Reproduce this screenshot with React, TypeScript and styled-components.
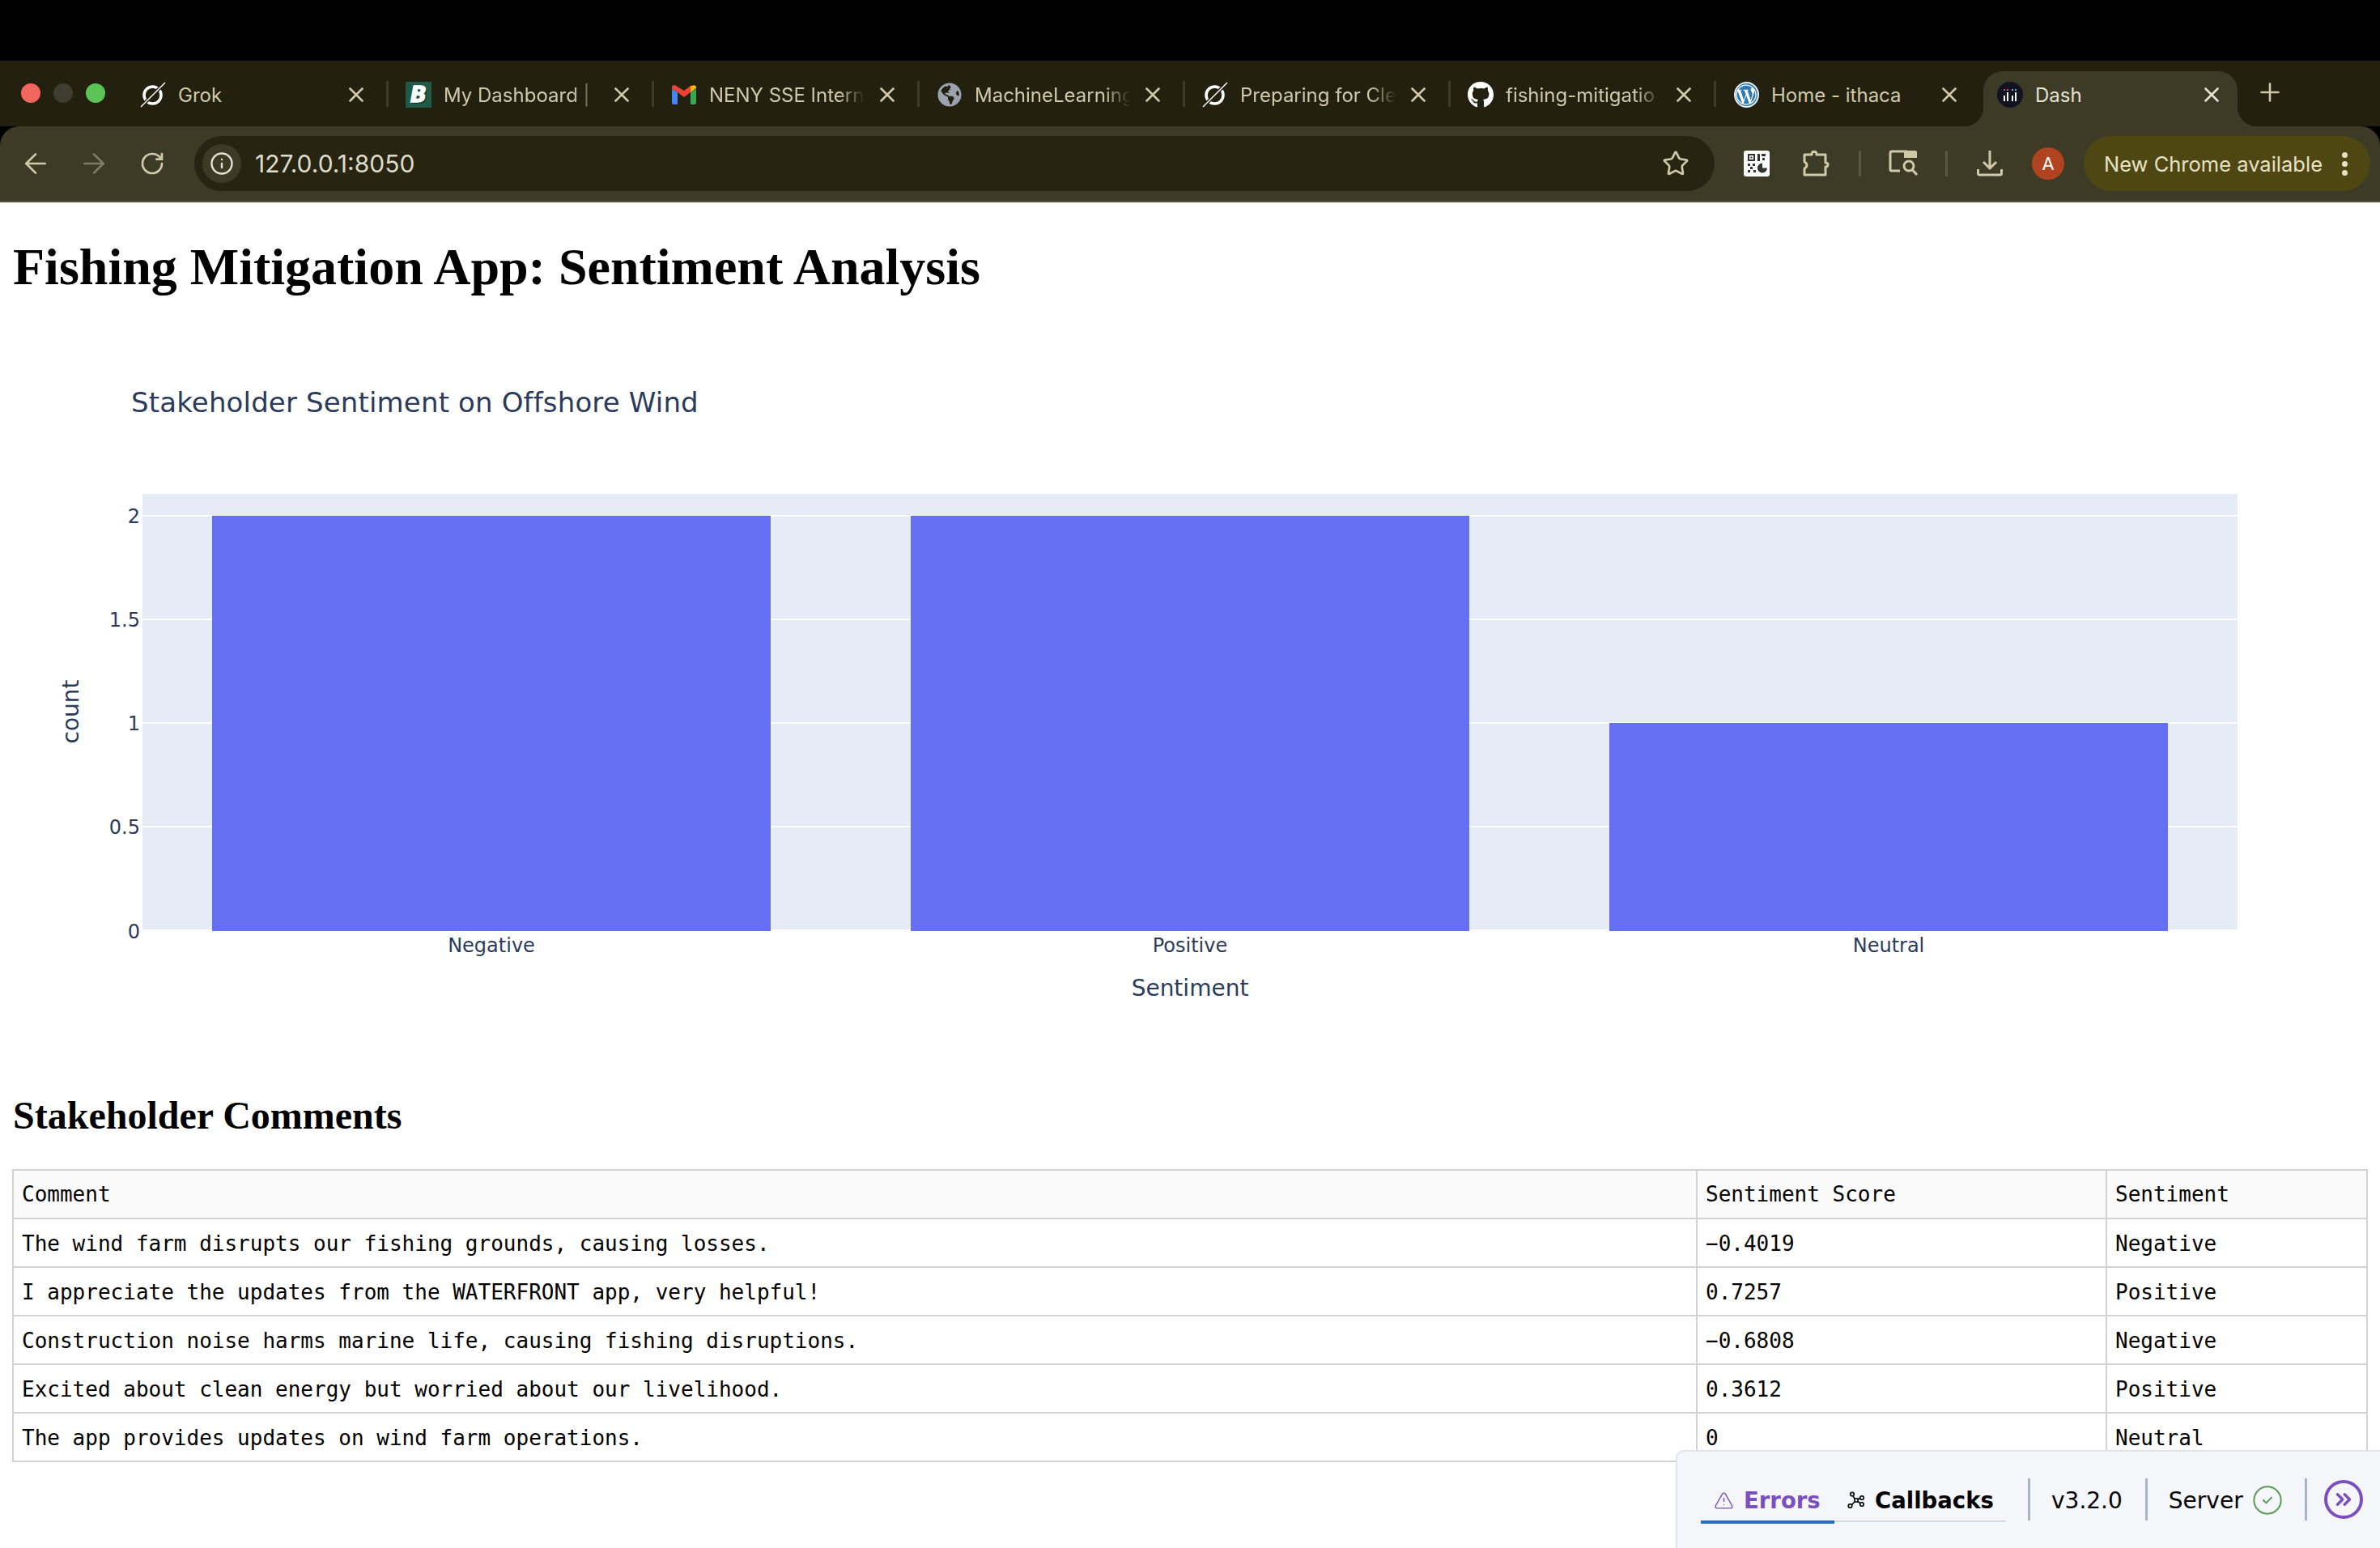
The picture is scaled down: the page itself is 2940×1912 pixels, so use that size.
import React from 'react';
import styled, { createGlobalStyle } from 'styled-components';
import { X, Plus, ArrowLeft, ArrowRight, RotateCw, Info, Star, TriangleAlert, CircleCheck, ChevronsRight } from 'lucide-react';
import { FaGithub, FaGlobeAmericas, FaWordpressSimple } from 'react-icons/fa';

const GlobalStyle = createGlobalStyle`
  html, body {
    margin: 0;
    background: #fff;
    overflow: hidden;
  }
  body {
    font-family: "Liberation Serif", serif;
    color: #000;
  }
`;

const GrokIcon = () => (
  <svg width="32" height="32" viewBox="0 0 32 32" fill="none">
    <circle cx="15.500" cy="16.500" r="10.500" stroke="#fff" strokeWidth="3.500" />
    <path d="M3 29 29 3" stroke="#242010" strokeWidth="4.500" />
    <path d="M1 31 31 1" stroke="#fff" strokeWidth="1.500" />
  </svg>
);

const GmailIcon = () => (
  <svg width="32" height="24" viewBox="0 0 32 24">
    <path d="M1 5v17a2 2 0 0 0 2 2h5V9z" fill="#4285f4" />
    <path d="M31 5v17a2 2 0 0 1-2 2h-5V9z" fill="#34a853" />
    <path d="M24 1v8l7-5V3c0-2.500-3-3.500-5-2z" fill="#fbbc04" />
    <path d="M1 3v2l7 4 8 6 8-6V1l-8 6-10-6C4-1 1 .5 1 3z" fill="#ea4335" />
  </svg>
);

const DashIcon = () => (
  <svg width="32" height="32" viewBox="0 0 32 32">
    <circle cx="16" cy="16" r="16" fill="#111420" />
    <g fill="#e0407f">
      <rect x="8" y="9" width="2" height="2" />
      <rect x="12" y="9" width="2" height="2" />
    </g>
    <g fill="#7aa8e8">
      <rect x="18" y="9" width="2" height="2" />
      <rect x="22" y="9" width="2" height="2" />
    </g>
    <g fill="#fff">
      <rect x="8" y="17" width="2" height="7" />
      <rect x="12" y="13" width="2" height="11" />
      <rect x="18" y="17" width="2" height="7" />
      <rect x="22" y="13" width="2" height="11" />
    </g>
  </svg>
);

const QrIcon = () => (
  <svg width="32" height="32" viewBox="0 0 32 32">
    <rect width="32" height="32" rx="3" fill="#fff" />
    <g fill="#333">
      <path fillRule="evenodd" d="M5 4h9v9H5zM7 6v5h5V6z" />
      <rect x="8.500" y="7.500" width="2" height="2" />
      <rect x="17" y="4" width="3" height="9" />
      <rect x="22" y="4" width="5" height="3" />
      <rect x="23" y="9" width="3" height="3" />
      <rect x="5" y="16" width="3" height="3" />
      <rect x="11" y="16" width="3" height="3" />
      <rect x="8" y="20" width="3" height="3" />
      <rect x="5" y="24" width="3" height="3" />
      <rect x="12" y="24" width="3" height="3" />
      <path d="M23 15.500a6 6 0 1 0 6 6h-6z" />
    </g>
  </svg>
);

const PuzzleIcon = () => (
  <svg width="34" height="34" viewBox="0 0 34 34" fill="none">
    <path
      d="M2 6h9c0-5 6-5 6 0h11v10c4 0 4 5 0 5v10H2v-8c4-2 4-6 0-8z"
      stroke="#cfc9aa"
      strokeWidth="3"
      strokeLinejoin="round"
    />
  </svg>
);

const PanelSearchIcon = () => (
  <svg width="36" height="34" viewBox="0 0 36 34" fill="none">
    <path d="M14 26H4a2 2 0 0 1-2-2V4a2 2 0 0 1 2-2h19" stroke="#cfc9aa" strokeWidth="3" />
    <path d="M19 1h14a2 2 0 0 1 2 2v7H19z" fill="#cfc9aa" />
    <circle cx="25" cy="20" r="6" stroke="#cfc9aa" strokeWidth="3" />
    <path d="M29.500 25 35 31" stroke="#cfc9aa" strokeWidth="3" />
  </svg>
);

const DownloadIcon = () => (
  <svg width="32" height="32" viewBox="0 0 32 32" fill="none">
    <path d="M16 0v22M8 14l8 8 8-8" stroke="#cfc9aa" strokeWidth="3" />
    <path d="M1.500 23v5a2 2 0 0 0 2 2h25a2 2 0 0 0 2-2v-5" stroke="#cfc9aa" strokeWidth="3" />
  </svg>
);

const CallbacksIcon = () => (
  <svg width="22" height="22" viewBox="0 0 22 22" fill="none" stroke="#000" strokeWidth="1.600">
    <circle cx="6" cy="3.500" r="2.300" />
    <circle cx="18" cy="8" r="2.300" />
    <circle cx="3.500" cy="18" r="2.300" />
    <circle cx="18" cy="16" r="2.300" />
    <rect x="9" y="9" width="4" height="4" />
    <path d="M7 6l2.500 3.500M15.800 8.500 13 10M5.500 16.500 9 13M13 12.500l3 2.300" />
  </svg>
);

const Browser = styled.header`
  background: #000;
  padding-top: 75px;
`;

const TabStrip = styled.div`
  display: flex;
  align-items: flex-end;
  height: 81px;
  background: #242010;
`;

const WindowButtons = styled.div`
  display: flex;
  align-self: flex-start;
  gap: 16px;
  width: 124px;
  padding: 28px 0 0 26px;
`;

const Light = styled.span<{ $color: string }>`
  width: 24px;
  height: 24px;
  border-radius: 50%;
  background: ${(p) => p.$color};
`;

const Tab = styled.div<{ $active?: boolean; $sep?: boolean }>`
  position: relative;
  display: flex;
  align-items: center;
  flex: none;
  box-sizing: border-box;
  width: ${(p) => (p.$active ? '314px' : '328px')};
  height: 68px;
  padding: 0 ${(p) => (p.$active ? '22px' : '28px')} 10px ${(p) => (p.$active ? '17px' : '23px')};
  margin-left: ${(p) => (p.$active ? '4px' : '0')};
  font: 24px Inter, sans-serif;
  color: ${(p) => (p.$active ? '#e4e2d2' : '#cfc9aa')};
  background: ${(p) => (p.$active ? '#3d3b25' : 'transparent')};
  border-radius: 24px 24px 0 0;

  &::after {
    content: '';
    display: ${(p) => (p.$sep ? 'block' : 'none')};
    position: absolute;
    right: -2px;
    top: 12px;
    width: 3px;
    height: 32px;
    background: #3d3b25;
  }

  &::before {
    content: '';
    display: ${(p) => (p.$active ? 'block' : 'none')};
    position: absolute;
    left: -24px;
    right: -24px;
    bottom: 0;
    height: 24px;
    background:
      radial-gradient(circle at 0 0, transparent 24px, #3d3b25 24.5px) left / 24px 24px no-repeat,
      radial-gradient(circle at 100% 0, transparent 24px, #3d3b25 24.5px) right / 24px 24px no-repeat;
  }
`;

const Favicon = styled.span`
  position: relative;
  display: flex;
  align-items: center;
  justify-content: center;
  flex: none;
  width: 32px;
  height: 32px;
  margin-right: 15px;
`;

const BoltBadge = styled.span`
  display: block;
  width: 32px;
  height: 32px;
  background: #1f5a48;
  color: #fff;
  font: italic 700 26px/32px "DejaVu Sans", sans-serif;
  text-align: center;
  -webkit-text-stroke: 1.5px #fff;
  text-shadow: 2px 2px 0 #0e3a2c;
`;

const WpBadge = styled.span`
  display: flex;
  align-items: center;
  justify-content: center;
  width: 31px;
  height: 32px;
  border-radius: 50%;
  background: #2f78b0;
  border: 2px solid #e8eef2;
  box-sizing: border-box;
  color: #fff;
`;

const TabTitle = styled.span<{ $fade?: boolean }>`
  flex: 1;
  min-width: 0;
  overflow: hidden;
  white-space: nowrap;
  ${(p) =>
    p.$fade
      ? 'mask-image: linear-gradient(to right, #000 160px, transparent 192px);'
      : ''}
`;

const TabClose = styled.span`
  display: flex;
  align-items: center;
  justify-content: center;
  flex: none;
  width: 20px;

  svg {
    flex: none;
  }
`;

const NewTab = styled.div`
  display: flex;
  align-items: center;
  justify-content: center;
  width: 80px;
  height: 68px;
  padding-bottom: 17px;
  box-sizing: border-box;
  color: #cfc9aa;
`;

const Toolbar = styled.div`
  display: flex;
  align-items: center;
  box-sizing: border-box;
  height: 94px;
  padding: 0 12px 0 8px;
  background: #3d3b25;
  border-bottom: 2px solid #555343;
  border-radius: 24px 24px 0 0;
`;

const NavSlot = styled.span<{ $dim?: boolean; $width?: number; $left?: number }>`
  display: flex;
  align-items: center;
  justify-content: center;
  flex: none;
  width: ${(p) => p.$width ?? 72}px;
  margin-left: ${(p) => p.$left ?? 0}px;
  color: ${(p) => (p.$dim ? '#7f7c66' : '#cfc9aa')};
`;

const Omnibox = styled.div`
  display: flex;
  align-items: center;
  flex: none;
  box-sizing: border-box;
  width: 1878px;
  height: 68px;
  margin-left: 16px;
  padding: 0 31px 0 10px;
  border-radius: 34px;
  background: #282412;
  color: #dedbca;
  font: 30px Inter, sans-serif;
`;

const InfoChip = styled.span`
  display: flex;
  align-items: center;
  justify-content: center;
  width: 48px;
  height: 48px;
  margin-right: 17px;
  border-radius: 50%;
  background: #3d3b25;
  color: #e4e2d2;
`;

const Url = styled.span`
  flex: 1;
`;

const ToolSep = styled.span`
  flex: none;
  width: 3px;
  height: 32px;
  margin: 0 34px;
  border-radius: 2px;
  background: #5a5842;
`;

const Avatar = styled.span`
  display: flex;
  align-items: center;
  justify-content: center;
  flex: none;
  width: 40px;
  height: 40px;
  margin: 0 24px 0 36px;
  border-radius: 50%;
  background: #b04420;
  color: #fff;
  font: 22px Inter, sans-serif;
`;

const UpdatePill = styled.div`
  display: flex;
  align-items: center;
  flex: none;
  box-sizing: border-box;
  width: 354px;
  height: 68px;
  padding: 0 28px 0 25px;
  border-radius: 34px;
  background: #4f4713;
  color: #e6e1c4;
  font: 25.5px Inter, sans-serif;
  white-space: nowrap;
`;

const MenuDots = styled.span`
  display: flex;
  flex-direction: column;
  gap: 4px;
  margin-left: auto;

  i {
    display: block;
    width: 7px;
    height: 7px;
    border-radius: 50%;
    background: #e6e1c4;
  }
`;

const Page = styled.main`
  padding: 0 16px;
`;

const Title = styled.h1`
  margin: 43px 0;
  font-size: 64px;
  line-height: 74px;
  font-weight: 700;
`;

const ChartFrame = styled.div`
  height: 900px;

  svg {
    display: block;
  }

  text {
    fill: #2c3b5c;
    font-family: "DejaVu Sans", sans-serif;
  }
`;

const Subtitle = styled.h2`
  margin: 40px 0 39px;
  font-size: 48px;
  line-height: 55px;
  font-weight: 700;
`;

const Table = styled.table`
  width: 2908px;
  margin-left: -1px;
  border-collapse: collapse;
  table-layout: fixed;
  font: 26px "DejaVu Sans Mono", monospace;

  th, td {
    height: 60px;
    padding: 0 10px;
    box-sizing: border-box;
    border: 2px solid #d3d3d3;
    font-weight: 400;
    text-align: left;
    white-space: nowrap;
  }

  td {
    padding-top: 1px;
  }

  th {
    background: #fafafa;
  }
`;

const DevTools = styled.aside`
  position: fixed;
  right: 0;
  bottom: 0;
  display: flex;
  align-items: flex-start;
  box-sizing: border-box;
  width: 870px;
  height: 121px;
  padding: 33px 0 0 29px;
  background: #f5f6fa;
  border: 2px solid #e0e3ec;
  border-width: 2px 0 0 2px;
  border-top-left-radius: 10px;
  font: 28px "DejaVu Sans", sans-serif;
`;

const DevTabs = styled.div`
  display: flex;
  align-items: flex-start;
  flex: none;
  width: 377px;
  margin-right: 27px;
`;

const DevTab = styled.div<{ $active?: boolean; $width: number }>`
  display: flex;
  align-items: center;
  gap: 12px;
  box-sizing: border-box;
  width: ${(p) => p.$width}px;
  height: ${(p) => (p.$active ? 56 : 54)}px;
  padding: 2px 0 0 16px;
  border-bottom: ${(p) => (p.$active ? '4px solid #2a6fbe' : '2px solid #d1d8e6')};
  color: ${(p) => (p.$active ? '#7a50c0' : '#000')};
  font-size: 27.5px;
  font-weight: 700;
`;

const DevSection = styled.div<{ $pad: number }>`
  display: flex;
  align-items: center;
  gap: 10px;
  flex: none;
  box-sizing: content-box;
  height: 50px;
  padding: 2px ${(p) => p.$pad}px 0 26px;
  border-left: 3px solid #a9b3cd;
`;

const ExpandButton = styled.span`
  display: flex;
  align-items: center;
  justify-content: center;
  box-sizing: border-box;
  width: 48px;
  height: 48px;
  margin: -2px 0 0 -5px;
  border: 4px solid #7a50c0;
  border-radius: 50%;
  color: #7a50c0;
`;

const tabs = [
  { title: 'Grok', icon: <GrokIcon /> },
  { title: 'My Dashboard |', icon: <BoltBadge>B</BoltBadge>, fade: true },
  { title: 'NENY SSE Intern', icon: <GmailIcon />, fade: true },
  { title: 'MachineLearning', icon: <FaGlobeAmericas size={30} color="#9aa3ad" />, fade: true },
  { title: 'Preparing for Cle', icon: <GrokIcon />, fade: true },
  { title: 'fishing-mitigatio', icon: <FaGithub size={34} color="#fff" />, fade: true },
  { title: 'Home - ithaca', icon: <WpBadge><FaWordpressSimple size={26} /></WpBadge> },
];

const ticks = [
  { label: '2', y: 637 },
  { label: '1.5', y: 765 },
  { label: '1', y: 893 },
  { label: '0.5', y: 1021 },
  { label: '0', y: 1150 },
];

const bars = [
  { label: 'Negative', x: 262, top: 637 },
  { label: 'Positive', x: 1125, top: 637 },
  { label: 'Neutral', x: 1988, top: 893 },
];

const rows = [
  ['The wind farm disrupts our fishing grounds, causing losses.', '\u22120.4019', 'Negative'],
  ['I appreciate the updates from the WATERFRONT app, very helpful!', '0.7257', 'Positive'],
  ['Construction noise harms marine life, causing fishing disruptions.', '\u22120.6808', 'Negative'],
  ['Excited about clean energy but worried about our livelihood.', '0.3612', 'Positive'],
  ['The app provides updates on wind farm operations.', '0', 'Neutral'],
];

const SentimentChart = () => (
  <svg width="2908" height="900" viewBox="16 410 2908 900">
    <text x="162" y="509" fontSize="34" letterSpacing="0.15">Stakeholder Sentiment on Offshore Wind</text>
    <rect x="176" y="610" width="2588" height="538" fill="#e5ecf6" />
    {ticks.map((t) => (
      <g key={t.label}>
        <rect x="176" y={t.y - 1} width="2588" height={t.label === '0' ? 4 : 2} fill="#fff" />
        <text x="173" y={t.y + 9} fontSize="24" textAnchor="end">{t.label}</text>
      </g>
    ))}
    {bars.map((b) => (
      <g key={b.label}>
        <rect x={b.x} y={b.top} width="690" height={1150 - b.top} fill="#656ff2" />
        <text x={b.x + 345} y="1176" fontSize="24" textAnchor="middle">{b.label}</text>
      </g>
    ))}
    <text x="1470" y="1230" fontSize="28" textAnchor="middle">Sentiment</text>
    <text x="0" y="0" fontSize="28" textAnchor="middle" transform="translate(97 879) rotate(-90)">count</text>
  </svg>
);

export default function App() {
  return (
    <>
      <GlobalStyle />
      <Browser>
        <TabStrip>
          <WindowButtons>
            <Light $color="#f1675f" />
            <Light $color="#3f3d2f" />
            <Light $color="#5bc455" />
          </WindowButtons>
          {tabs.map((t, i) => (
            <Tab key={t.title} $sep={i < tabs.length - 1}>
              <Favicon>{t.icon}</Favicon>
              <TabTitle $fade={t.fade}>{t.title}</TabTitle>
              <TabClose><X size={30} strokeWidth={2.1} /></TabClose>
            </Tab>
          ))}
          <Tab $active>
            <Favicon><DashIcon /></Favicon>
            <TabTitle>Dash</TabTitle>
            <TabClose><X size={30} strokeWidth={2.1} /></TabClose>
          </Tab>
          <NewTab><Plus size={36} strokeWidth={1.7} /></NewTab>
        </TabStrip>
        <Toolbar>
          <NavSlot><ArrowLeft size={40} strokeWidth={1.6} /></NavSlot>
          <NavSlot $dim><ArrowRight size={40} strokeWidth={1.6} /></NavSlot>
          <NavSlot><RotateCw size={32} strokeWidth={2} /></NavSlot>
          <Omnibox>
            <InfoChip><Info size={30} strokeWidth={1.9} /></InfoChip>
            <Url>127.0.0.1:8050</Url>
            <Star size={34} strokeWidth={1.9} color="#cfc9aa" />
          </Omnibox>
          <NavSlot $width={36} $left={34}><QrIcon /></NavSlot>
          <NavSlot $width={36} $left={38}><PuzzleIcon /></NavSlot>
          <ToolSep />
          <NavSlot $width={36}><PanelSearchIcon /></NavSlot>
          <ToolSep />
          <NavSlot $width={32} $left={2}><DownloadIcon /></NavSlot>
          <Avatar>A</Avatar>
          <UpdatePill>
            New Chrome available
            <MenuDots><i /><i /><i /></MenuDots>
          </UpdatePill>
        </Toolbar>
      </Browser>
      <Page>
        <Title>Fishing Mitigation App: Sentiment Analysis</Title>
        <ChartFrame><SentimentChart /></ChartFrame>
        <Subtitle>Stakeholder Comments</Subtitle>
        <Table>
          <colgroup>
            <col width="2080" />
            <col width="506" />
            <col width="322" />
          </colgroup>
          <thead>
            <tr>
              <th>Comment</th>
              <th>Sentiment Score</th>
              <th>Sentiment</th>
            </tr>
          </thead>
          <tbody>
            {rows.map((r) => (
              <tr key={r[0]}>
                {r.map((c) => <td key={c}>{c}</td>)}
              </tr>
            ))}
          </tbody>
        </Table>
      </Page>
      <DevTools>
        <DevTabs>
          <DevTab $active $width={165}>
            <TriangleAlert size={25} strokeWidth={1.4} />
            Errors
          </DevTab>
          <DevTab $width={212}>
            <CallbacksIcon />
            Callbacks
          </DevTab>
        </DevTabs>
        <DevSection $pad={28}>v3.2.0</DevSection>
        <DevSection $pad={26}>
          Server
          <CircleCheck size={40} strokeWidth={1.2} color="#5b9a52" />
        </DevSection>
        <DevSection $pad={0}>
          <ExpandButton><ChevronsRight size={30} strokeWidth={2.8} /></ExpandButton>
        </DevSection>
      </DevTools>
    </>
  );
}
